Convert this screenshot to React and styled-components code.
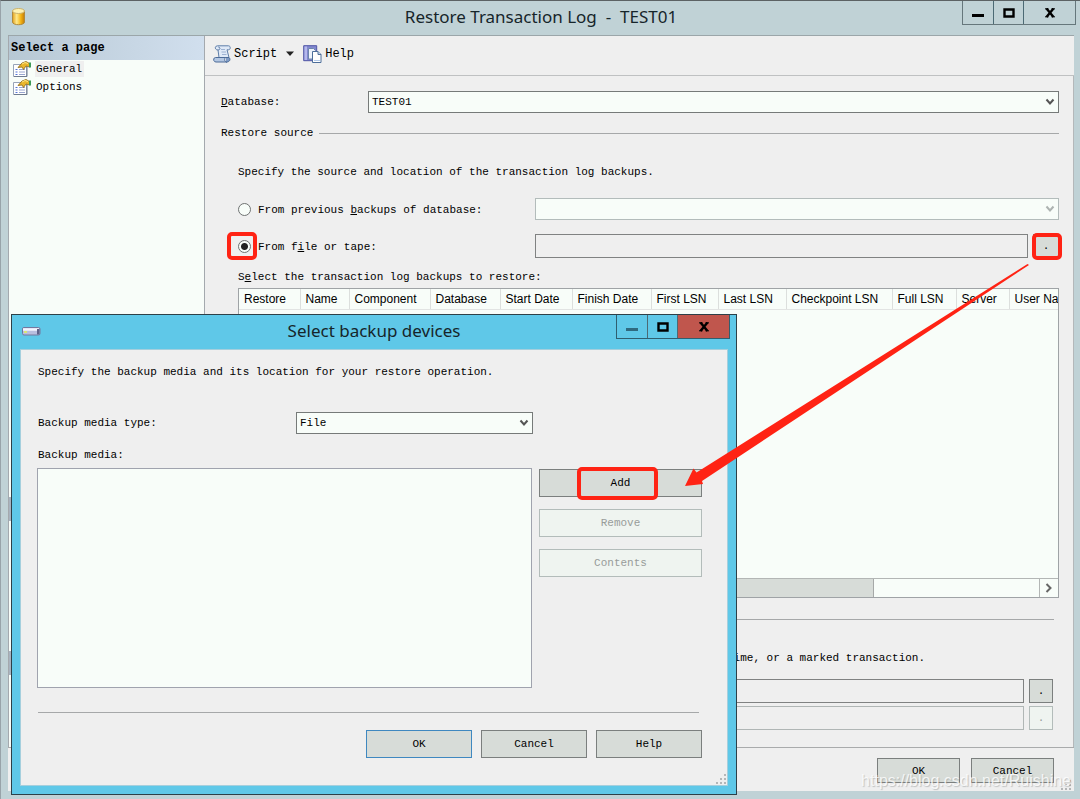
import React from 'react'
import styled, { createGlobalStyle } from 'styled-components'

const GlobalStyle = createGlobalStyle`
    * {
        box-sizing: border-box;
    }
    body {
        margin: 0;
        background-color: #c0d2d6;
        color: #000;
        font: 11px/16px "Liberation Mono", monospace;
    }
    button, input, select {
        margin: 0;
        font: inherit;
        color: inherit;
    }
`

/* ---------- windows ---------- */

const Screen = styled.div`
    position: relative;
    min-height: 100vh;
    overflow: hidden;
`

const MainWindow = styled.main`
    display: flex;
    flex-direction: column;
    min-height: 100vh;
    padding: 0 6px 8px 7px;
    border-top: 1px solid #5c6264;
    border-left: 1px solid #98a3a9;
    background-color: #c0d2d6;
`

const DialogWindow = styled.section`
    position: absolute;
    left: 11px;
    top: 314px;
    width: 726px;
    padding: 0 8px 8px;
    border: 1px solid #2d4048;
    background-color: #5fc8e8;
`

const TitleBar = styled.header`
    display: grid;
    grid-template-columns: 114px 1fr 114px;
    align-items: start;
    height: 34px;
`

const TitleIcon = styled.span`
    display: flex;
    align-items: center;
    height: 32px;
    padding-left: 2px;
`

const Title = styled.h1`
    margin: 0;
    color: #16252a;
    font: 400 17px/32px "Noto Sans", sans-serif;
    text-align: center;
    white-space: pre;
`

const WindowButtons = styled.div`
    display: flex;
    justify-self: end;
    height: 24px;
    margin-right: -2px;
    border: 1px solid ${(props) => (props.$active ? '#2f5f70' : '#66777c')};
    border-top: 0;
`

const WindowButton = styled.button`
    display: flex;
    align-items: center;
    justify-content: center;
    width: ${(props) => (props.$wide ? 52 : 30)}px;
    padding: 0;
    border: 0;
    border-left: ${(props) => (props.$first ? 0 : 1)}px solid #4c6a74;
    background-color: ${(props) => (props.$danger ? '#c0564d' : 'transparent')};
`

/* ---------- main window ---------- */

const Frame = styled.div`
    flex: 1;
    display: flex;
    flex-direction: column;
    border-top: 1px solid #9ba6a9;
    background-color: #efefef;
`

const Columns = styled.div`
    flex: 1;
    display: flex;
    border-bottom: 1px solid #a9abac;
`

const Sidebar = styled.nav`
    display: flex;
    flex-direction: column;
    width: 197px;
    border: 1px solid #a4a9ae;
    border-width: 0 1px;
    background-color: #f8fdf9;
`

const SidebarTitle = styled.h2`
    height: 24px;
    margin: 0;
    padding-left: 2px;
    background: linear-gradient(90deg, #b7c8d4, #d1dfee);
    font-size: 12px;
    line-height: 24px;
`

const SidebarBand = styled.div`
    height: 24px;
    background-color: #a9b4c0;
`

const PageList = styled.ul`
    height: 437px;
    margin: 0;
    padding: 0 0 0 4px;
    list-style: none;
`

const SidebarSection = styled.div`
    height: 130px;
`

const PageItem = styled.li`
    display: flex;
    align-items: center;
    gap: 4px;
    height: 18px;
`

const PageLink = styled.a`
    padding: 0 2px 0 1px;
    background-color: ${(props) => (props.$current ? '#efefef' : 'transparent')};
    color: #000;
    text-decoration: none;
`

const Content = styled.div`
    flex: 1;
    min-width: 0;
    display: flex;
    flex-direction: column;
`

const Toolbar = styled.div`
    display: flex;
    align-items: center;
    height: 40px;
    padding: 0 0 4px 8px;
    border-bottom: 1px solid #bfc1c2;
    font-size: 12px;
`

const ToolButton = styled.button`
    display: flex;
    align-items: center;
    gap: 3px;
    margin-right: 8px;
    padding: 0;
    border: 0;
    background: none;
`

const Form = styled.form`
    flex: 1;
    padding: 14px 14px 0 16px;
    border-right: 1px solid #b4b8ba;
`

const Row = styled.div`
    display: flex;
    align-items: center;
    gap: 5px;
    height: 24px;
    margin-top: ${(props) => props.$above || 0}px;
`

const Label = styled.label`
    flex: none;
    width: ${(props) => props.$width}px;
    white-space: nowrap;
`

const SectionTitle = styled.div`
    display: flex;
    align-items: center;
    gap: 6px;
    height: 16px;
    margin: ${(props) => props.$space || '11px 0 0'};

    &::after {
        content: "";
        flex: 1;
        height: 1px;
        background-color: #a6a8a9;
    }
`

const Indent = styled.div`
    padding-left: 17px;
`

const Text = styled.p`
    margin: 0;
    padding-top: ${(props) => props.$above || 0}px;
    padding-bottom: ${(props) => props.$below || 0}px;
    white-space: nowrap;
`

const LastText = styled(Text)`
    padding: 23px 0 13px 506px;
`

const RadioLabel = styled.label`
    position: relative;
    display: flex;
    align-items: center;
    flex: none;
    gap: 7px;
    width: 292px;
    white-space: pre;

    & > span {
        padding-top: 2px;
    }
`

const Radio = styled.input`
    appearance: none;
    width: 13px;
    height: 13px;
    border: 1px solid #6f7272;
    border-radius: 50%;
    background-color: #f8fdf9;

    &:checked {
        background-image: radial-gradient(circle, #222 0 3px, transparent 4px);
    }
`

const TextBox = styled.input`
    flex: 1;
    min-width: 0;
    height: 24px;
    padding: 0 4px;
    border: 1px solid ${(props) => (props.disabled ? '#b0b6b5' : '#808282')};
    border-radius: 0;
    background-color: #efefef;
`

const SelectBox = styled.span`
    display: grid;
    align-items: center;
    flex: ${(props) => (props.$width ? 'none' : 1)};
    width: ${(props) => (props.$width ? props.$width + 'px' : 'auto')};

    & > * {
        grid-area: 1 / 1;
    }
    & > svg {
        justify-self: end;
        margin-right: 4px;
        pointer-events: none;
    }
`

const SelectInput = styled.select`
    appearance: none;
    width: 100%;
    height: 22px;
    padding: 0 3px;
    border: 1px solid ${(props) => (props.disabled ? '#b3bcbb' : '#767a79')};
    border-radius: 0;
    background-color: #f8fdf9;
    opacity: 1;
`

const Button = styled.button`
    position: relative;
    width: ${(props) => props.$width || 106}px;
    height: ${(props) => props.$height || 28}px;
    padding: 0;
    border: 1px solid ${(props) => (props.$primary ? '#3f88c0' : '#7b7f7e')};
    border-radius: 0;
    background-color: #d7dcd8;

    &:disabled {
        border-color: #b3bcba;
        background-color: #eff4f0;
        color: #989c9a;
    }
`

const Grid = styled.div`
    display: flex;
    flex-direction: column;
    height: 310px;
    margin-top: 3px;
    border: 1px solid #9fa3a6;
    background-color: #f8fdf9;
    overflow: hidden;
`

const GridBody = styled.div`
    flex: 1;
    overflow: hidden;
`

const BackupTable = styled.table`
    table-layout: fixed;
    width: 848px;
    border-collapse: collapse;
    font: 12px/20px "Liberation Sans", sans-serif;
`

const HeadCell = styled.th`
    width: ${(props) => props.$width}px;
    height: 20px;
    padding: 0 0 0 5px;
    border-right: 1px solid #dcdfdd;
    border-bottom: 1px solid #e2e4e3;
    font-weight: 400;
    text-align: left;
    white-space: nowrap;
`

const ScrollTrack = styled.div`
    display: grid;
    grid-template-columns: 18px 1fr 165px 19px;
    height: 19px;
    border-top: 1px solid #b3b6b5;
`

const ScrollThumb = styled.div`
    border-right: 1px solid #a6a9a8;
    background-color: #d7dcd8;
`

const ScrollButton = styled.button`
    display: flex;
    align-items: center;
    justify-content: center;
    padding: 0;
    border: 0;
    border-left: 1px solid #b3b6b5;
    background: none;
`

const RestoreTo = styled.div`
    display: flex;
    flex-direction: column;
    gap: 3px;
    padding: 0 6px 16px 169px;
`

const Footer = styled.footer`
    display: flex;
    justify-content: flex-end;
    align-items: flex-start;
    gap: 11px;
    height: 43px;
    padding: 10px 20px 0 0;
`

/* ---------- dialog ---------- */

const DialogBody = styled.form`
    position: relative;
    height: 437px;
    padding: 14px 25px 0 17px;
    border: 1px solid #a5cfdd;
    background-color: #efefef;
`

const MediaRow = styled.div`
    display: flex;
    align-items: flex-start;
    gap: 7px;
    height: 220px;
`

const MediaList = styled.div`
    flex: 1;
    align-self: stretch;
    margin-left: -1px;
    border: 1px solid #a0a3ae;
    background-color: #f8fdf9;
`

const ButtonStack = styled.div`
    display: flex;
    flex-direction: column;
    gap: 12px;
    padding-top: 1px;
`

const DialogButtons = styled.div`
    display: flex;
    justify-content: flex-end;
    gap: 9px;
    margin-top: 17px;
`

const Rule = styled.hr`
    height: 1px;
    margin: 24px 3px 0 0;
    border: 0;
    background-color: #a6a8a9;
`

const Grip = styled.svg`
    position: absolute;
    right: ${(props) => props.$edge || 1}px;
    bottom: ${(props) => props.$edge || 1}px;
`

/* ---------- marks drawn over the windows ---------- */

const Mark = styled.span`
    position: absolute;
    inset: ${(props) => props.$inset};
    border: 4px solid #ff2314;
    border-radius: 5px;
    pointer-events: none;
`

const Arrow = styled.svg`
    position: absolute;
    left: 684px;
    top: 263px;
    pointer-events: none;
`

const Watermark = styled.span`
    position: absolute;
    right: 9px;
    bottom: 8px;
    color: rgba(255, 255, 255, 0.8);
    font: 16px/20px "Liberation Sans", sans-serif;
    text-shadow: 1px 1px 1px rgba(120, 125, 125, 0.4);
    pointer-events: none;
`

/* ---------- icons ---------- */

const DatabaseIcon = () => (
    <svg width="16" height="20" viewBox="0 0 16 20">
        <defs>
            <linearGradient id="gold">
                <stop offset="0" stopColor="#e2a01c" />
                <stop offset="0.35" stopColor="#ffe98a" />
                <stop offset="0.7" stopColor="#f3b211" />
                <stop offset="1" stopColor="#c07a08" />
            </linearGradient>
        </defs>
        <path d="M2.500 4v11c0 3.600 12 3.600 12 0V4z" fill="url(#gold)" stroke="#b08a3c" />
        <ellipse cx="8.500" cy="4" rx="6" ry="2.500" fill="#fff2b0" stroke="#cbb26c" />
    </svg>
)

const PageIcon = () => (
    <svg width="18" height="17" viewBox="0 0 18 17">
        <path d="M.5 3.500h13v12H.5z" fill="#fff" stroke="#98a4b8" />
        <path d="M1 15.500h13V6" fill="none" stroke="#6f7b8f" />
        <path d="M2.500 8.500h2m-2 2.500h2m-2 2.500h2" stroke="#5575d8" />
        <path d="M6 8.500h6M6 11h6m-6 2.500h6" stroke="#9aa6cf" />
        <path d="M5 6.500 9 2l4-1.500 3.500 2V6L13 5l-2.500 3.500L9 6z" fill="#e8b52c" stroke="#8a6414" strokeWidth=".8" />
        <path d="m9 3 3-1.500 3 1" fill="none" stroke="#ffe98a" />
        <path d="M16 1.500h2v5h-2z" fill="#3f9a58" />
    </svg>
)

const ScriptIcon = () => (
    <svg width="18" height="18" viewBox="0 0 18 18">
        <path d="M4.500.8h11c2.300 0 2.300 4 0 4H14l2 7.700H6L5 5C1.500 5 1.500.8 4.500.8z" fill="#dfe9f7" stroke="#5f7ea8" />
        <path d="M5 5c2.500 0 2.500-3 .3-3" fill="none" stroke="#5f7ea8" />
        <path d="M2.500 12.500h10c-1.500 1.500-1 4.500 1.500 4.500H3c-3 0-3-4.500-.5-4.500z" fill="#b4c7e2" stroke="#4c6b98" />
        <path d="M13 17c4 .3 4.800-3 3-4.500h-3" fill="#7f9bc5" stroke="#4c6b98" />
        <path d="M8 4.500h4M8.500 7H13m-4 2.500h4.500" stroke="#9db2d2" />
    </svg>
)

const HelpIcon = () => (
    <svg width="19" height="18" viewBox="0 0 19 18">
        <path d="M.7.700h13v15H.7z" fill="#8288cf" stroke="#5057a5" />
        <path d="M1.500 1.500H4v13.500H1.500z" fill="#b4b8ec" />
        <path d="M5.500 3.500h5l2 2V14h-7z" fill="#edf3fc" stroke="#6d86ac" />
        <path d="M9.500 6.500H15l3 3v8H9.500z" fill="#fff" stroke="#4d6e9a" />
        <path d="M15 6.500v3h3" fill="#c7d7ee" stroke="#4d6e9a" />
        <path d="M11 15.500h6" stroke="#b5cbe8" />
    </svg>
)

const DriveIcon = () => (
    <svg width="19" height="9" viewBox="0 0 19 9">
        <rect x=".5" y=".5" width="17.500" height="7.500" rx="1.500" fill="#b9bfe0" stroke="#73789f" />
        <path d="M1 2.500h16" stroke="#f4f5ff" strokeWidth="2.500" />
        <path d="M2 5h3" stroke="#d8e774" strokeWidth="2" />
        <path d="M15 2v5.500h2.500V2z" fill="#5d6289" />
    </svg>
)

const Chevron = ({ color = '#555' }) => (
    <svg width="10" height="8" viewBox="0 0 10 8">
        <path d="m1.500 1.500 3.500 4 3.500-4" fill="none" stroke={color} strokeWidth="2" />
    </svg>
)

const MinimizeIcon = ({ color = '#000' }) => (
    <svg width="12" height="12" viewBox="0 0 12 12">
        <path d="M0 7h12v3H0z" fill={color} />
    </svg>
)

const MaximizeIcon = () => (
    <svg width="12" height="10" viewBox="0 0 12 10">
        <path d="M1.500 1.500h9v7h-9z" fill="none" stroke="#000" strokeWidth="2.400" />
    </svg>
)

const CloseIcon = () => (
    <svg width="12" height="10" viewBox="0 0 12 10">
        <path d="M2.500.5 9.500 9M9.500.5 2.500 9" stroke="#000" strokeWidth="2.400" />
        <path d="M1 .8h3.500M7.500.8H11M1 8.800h3.500M7.500 8.800H11" stroke="#000" />
    </svg>
)

const SizeGrip = ({ edge }) => (
    <Grip $edge={edge} width="10" height="10" viewBox="0 0 10 10">
        <path d="M8 0h2v2H8zM4 4h2v2H4zM8 4h2v2H8zM0 8h2v2H0zM4 8h2v2H4zM8 8h2v2H8z" fill="#b4b6b7" />
    </Grip>
)

const columns = [
    ['Restore', 61],
    ['Name', 49],
    ['Component', 81],
    ['Database', 70],
    ['Start Date', 72],
    ['Finish Date', 79],
    ['First LSN', 67],
    ['Last LSN', 68],
    ['Checkpoint LSN', 106],
    ['Full LSN', 64],
    ['Server', 53],
    ['User Name', 78],
]

const Controls = ({ active }) => (
    <WindowButtons $active={active}>
        <WindowButton $first aria-label="Minimize">
            <MinimizeIcon color={active ? '#2f6a80' : '#000'} />
        </WindowButton>
        <WindowButton aria-label="Maximize"><MaximizeIcon /></WindowButton>
        <WindowButton $wide $danger={active} aria-label="Close"><CloseIcon /></WindowButton>
    </WindowButtons>
)

const RestoreForm = () => (
    <Form>
        <Row>
            <Label htmlFor="database" $width={142}><u>D</u>atabase:</Label>
            <SelectBox>
                <SelectInput id="database"><option>TEST01</option></SelectInput>
                <Chevron />
            </SelectBox>
        </Row>
        <SectionTitle>Restore source</SectionTitle>
        <Indent>
            <Text $above={23} $below={17}>
                Specify the source and location of the transaction log backups.
            </Text>
            <Row>
                <RadioLabel>
                    <Radio type="radio" name="source" />
                    <span>From previous <u>b</u>ackups of database:</span>
                </RadioLabel>
                <SelectBox>
                    <SelectInput disabled aria-label="Previous backups of database" />
                    <Chevron color="#adb3b1" />
                </SelectBox>
            </Row>
            <Row $above={13}>
                <RadioLabel>
                    <Radio type="radio" name="source" defaultChecked />
                    <span>From f<u>i</u>le or tape:</span>
                    <Mark $inset="-5px 273px -5px -11px" />
                </RadioLabel>
                <TextBox readOnly aria-label="File or tape" />
                <Button type="button" $width={26} $height={24}>
                    .
                    <Mark $inset="-2px -4px -3px -2px" />
                </Button>
            </Row>
            <Text $above={11}>S<u>e</u>lect the transaction log backups to restore:</Text>
            <Grid>
                <GridBody>
                    <BackupTable>
                        <thead>
                            <tr>
                                {columns.map(([name, width]) => (
                                    <HeadCell key={name} $width={width}>{name}</HeadCell>
                                ))}
                            </tr>
                        </thead>
                    </BackupTable>
                </GridBody>
                <ScrollTrack>
                    <span />
                    <ScrollThumb />
                    <span />
                    <ScrollButton type="button" aria-label="Scroll right">
                        <svg width="8" height="10" viewBox="0 0 8 10">
                            <path d="m1.500 1 4 4-4 4" fill="none" stroke="#666" strokeWidth="2" />
                        </svg>
                    </ScrollButton>
                </ScrollTrack>
            </Grid>
        </Indent>
        <SectionTitle $space="13px 5px 0 0" />
        <LastText>time, or a marked transaction.</LastText>
        <RestoreTo>
            <Row>
                <TextBox readOnly aria-label="Point in time" />
                <Button type="button" $width={24} $height={24}>.</Button>
            </Row>
            <Row>
                <TextBox disabled aria-label="Marked transaction" />
                <Button type="button" disabled $width={24} $height={24}>.</Button>
            </Row>
        </RestoreTo>
    </Form>
)

const BackupDevices = () => (
    <DialogWindow role="dialog" aria-label="Select backup devices">
        <TitleBar>
            <TitleIcon><DriveIcon /></TitleIcon>
            <Title as="h2">Select backup devices</Title>
            <Controls active />
        </TitleBar>
        <DialogBody>
            <Text $below={31}>
                Specify the backup media and its location for your restore operation.
            </Text>
            <Row>
                <Label htmlFor="mediaType" $width={253}>Backup media type:</Label>
                <SelectBox $width={237}>
                    <SelectInput id="mediaType"><option>File</option></SelectInput>
                    <Chevron />
                </SelectBox>
            </Row>
            <Text $above={12} $below={5}>Backup media:</Text>
            <MediaRow>
                <MediaList role="listbox" aria-label="Backup media" tabIndex={0} />
                <ButtonStack>
                    <Button type="button" $width={163}>
                        Add
                        <Mark $inset="-3px 43px -4px 37px" />
                    </Button>
                    <Button type="button" $width={163} disabled>Remove</Button>
                    <Button type="button" $width={163} disabled>Contents</Button>
                </ButtonStack>
            </MediaRow>
            <Rule />
            <DialogButtons>
                <Button type="button" $primary>OK</Button>
                <Button type="button">Cancel</Button>
                <Button type="button">Help</Button>
            </DialogButtons>
            <SizeGrip />
        </DialogBody>
    </DialogWindow>
)

const App = () => {
    return (
        <Screen>
            <GlobalStyle />
            <MainWindow>
                <TitleBar>
                    <TitleIcon><DatabaseIcon /></TitleIcon>
                    <Title>{'Restore Transaction Log  -  TEST01'}</Title>
                    <Controls />
                </TitleBar>
                <Frame>
                    <Columns>
                        <Sidebar>
                            <SidebarTitle>Select a page</SidebarTitle>
                            <PageList>
                                <PageItem><PageIcon /><PageLink href="#general" $current>General</PageLink></PageItem>
                                <PageItem><PageIcon /><PageLink href="#options">Options</PageLink></PageItem>
                            </PageList>
                            <SidebarBand />
                            <SidebarSection />
                            <SidebarBand />
                        </Sidebar>
                        <Content>
                            <Toolbar>
                                <ToolButton>
                                    <ScriptIcon />
                                    Script
                                </ToolButton>
                                <ToolButton aria-label="Script options">
                                    <svg width="10" height="6" viewBox="0 0 10 6">
                                        <path d="M1 .5h8L5 5z" fill="#222" />
                                    </svg>
                                </ToolButton>
                                <ToolButton>
                                    <HelpIcon />
                                    Help
                                </ToolButton>
                            </Toolbar>
                            <RestoreForm />
                        </Content>
                    </Columns>
                    <Footer>
                        <Button $width={83} $height={25}>OK</Button>
                        <Button $width={83} $height={25}>Cancel</Button>
                    </Footer>
                </Frame>
            </MainWindow>
            <BackupDevices />
            <Arrow width="346" height="226" viewBox="0 0 346 226">
                <path d="M343.500 1 345 2 18 218l1 3L1 223 9.500 205.500l3 4z" fill="#ff2314" />
            </Arrow>
            <SizeGrip edge={9} />
            <Watermark>https://blog.csdn.net/Ruishine</Watermark>
        </Screen>
    )
}

export default App
